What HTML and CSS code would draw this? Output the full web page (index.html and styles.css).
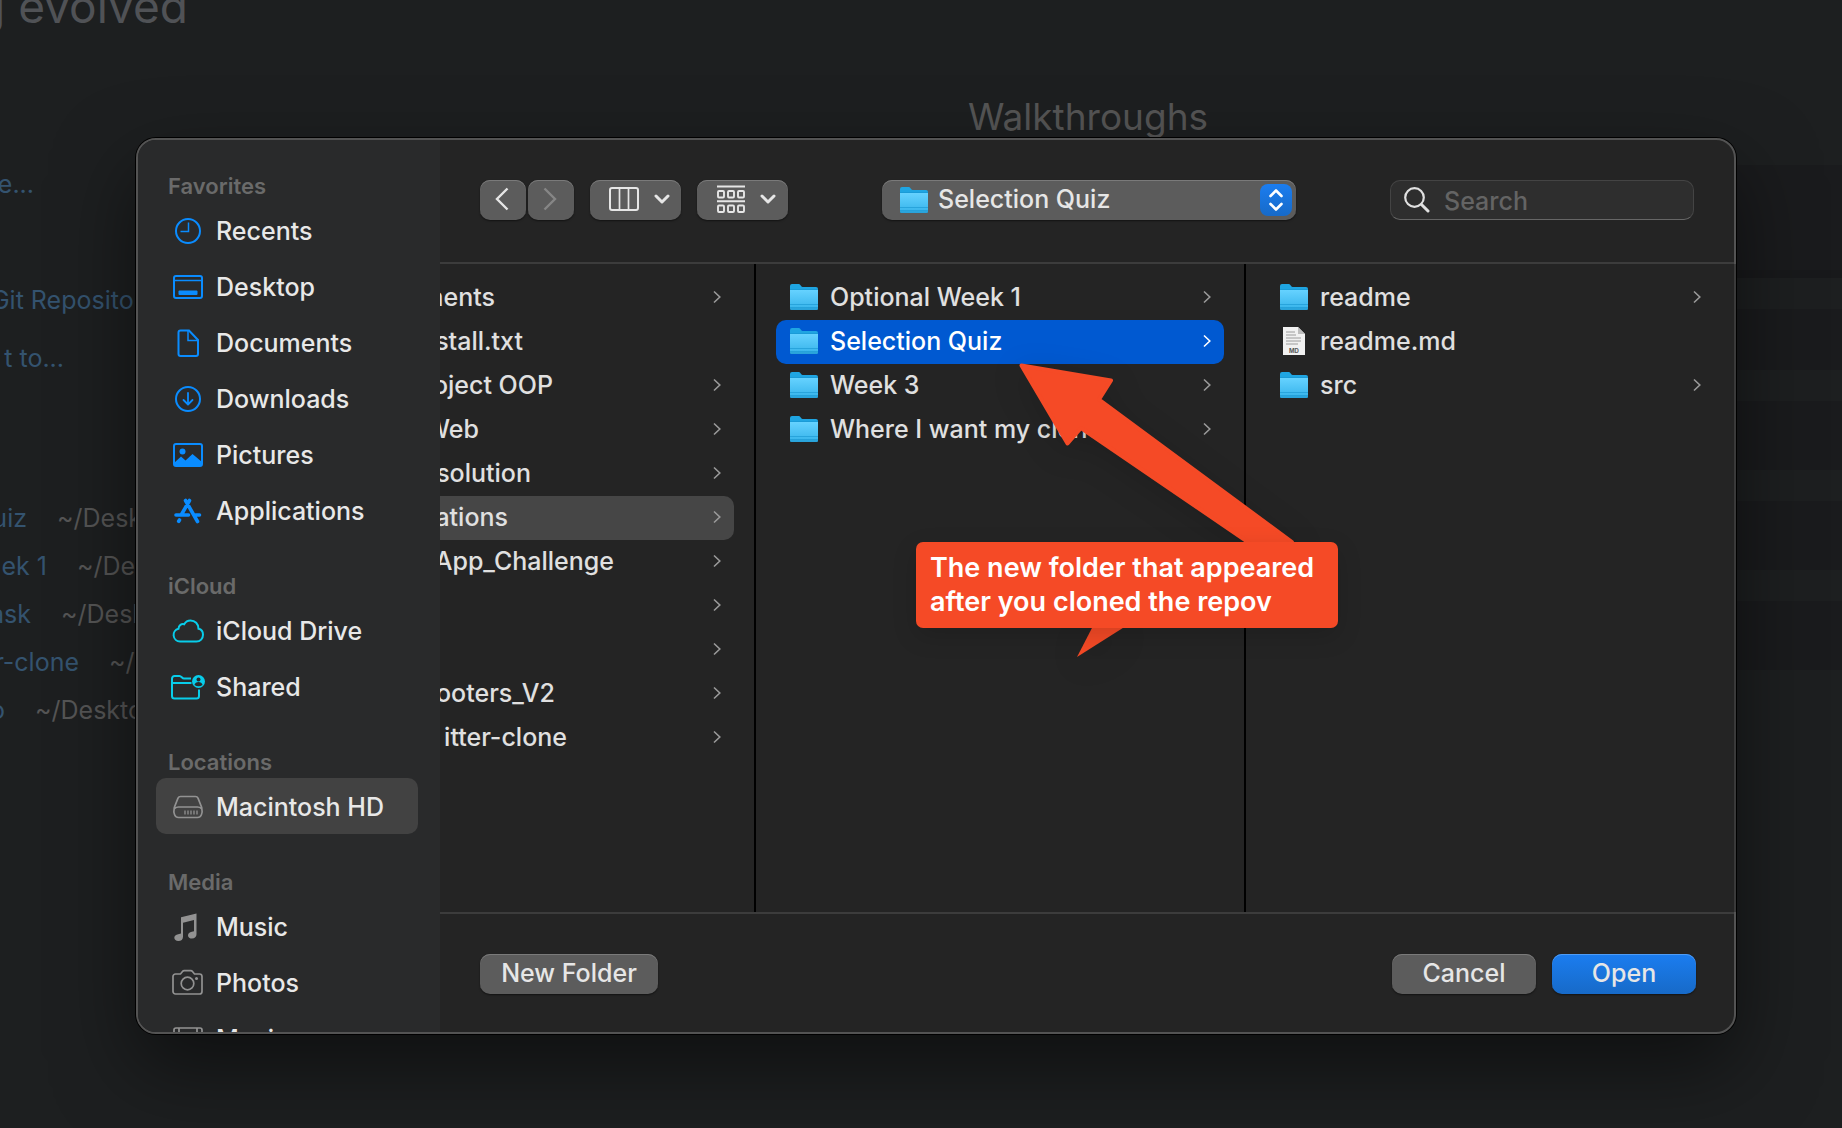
FILE: index.html
```html
<!DOCTYPE html>
<html lang="en">
<head>
<meta charset="utf-8">
<title>Open Folder</title>
<link rel="stylesheet" href="styles.css">
</head>
<body>
<svg class="defs" aria-hidden="true">
  <defs>
    <linearGradient id="folder-front" x1="0" y1="0" x2="0" y2="1">
      <stop offset="0" stop-color="#66d2ff"/>
      <stop offset="1" stop-color="#35b3ea"/>
    </linearGradient>
    <symbol id="folder" viewBox="0 0 28 28">
      <path d="M0 3a2 2 0 0 1 2-2h7c1.400 0 2 3 3.500 3H26a2 2 0 0 1 2 2v6H0z" fill="#1fa5e2"/>
      <path d="M0 7h28v18.500a1.500 1.500 0 0 1-1.500 1.500h-25A1.500 1.500 0 0 1 0 25.500z" fill="url(#folder-front)"/>
      <path d="M0 6.500h28M0 21.500h28M0 24.500h28" stroke="#1795d0" stroke-width="1" opacity=".6"/>
      <path d="M0 26h28" stroke="#1386bd" stroke-width="1" opacity=".7"/>
    </symbol>
    <symbol id="chevron" viewBox="0 0 8 14">
      <path d="M1 1.500 6.800 7 1 12.500" fill="none" stroke="currentColor" stroke-width="1.600"/>
    </symbol>
    <symbol id="down" viewBox="0 0 16 12">
      <path d="M2 3l6 6 6-6" fill="none" stroke="currentColor" stroke-width="3" stroke-linecap="round" stroke-linejoin="round"/>
    </symbol>
  </defs>
</svg>

<main class="welcome">
  <section class="start">
    <h2 class="tagline"><span>g evolved</span></h2>
    <ul class="actions">
      <li><a class="cut cut-file" href="#">e...</a></li>
      <li class="repo"><a class="cut cut-repo" href="#">Git Repository...</a></li>
      <li><a class="cut cut-connect" href="#">t to...</a></li>
    </ul>
    <ul class="recent">
      <li><a class="cut cut-1" href="#">uiz</a><span>~/Desktop</span></li>
      <li><a class="cut cut-2" href="#">ek 1</a><span>~/Desktop</span></li>
      <li><a class="cut cut-3" href="#">ask</a><span>~/Desktop</span></li>
      <li><a class="cut cut-4" href="#">r-clone</a><span>~/Desktop</span></li>
      <li><a class="cut cut-5" href="#">o</a><span>~/Desktop</span></li>
    </ul>
  </section>
  <section class="walkthroughs">
    <h2>Walkthroughs</h2>
    <div class="card card-main"></div>
    <div class="card"></div>
    <div class="card"></div>
    <div class="card"></div>
    <div class="card"></div>
  </section>
</main>

<div class="dialog" role="dialog" aria-label="Open">
  <nav class="sidebar">
    <h3>Favorites</h3>
    <a class="place blue" href="#"><svg viewBox="0 0 36 36"><circle cx="18" cy="18" r="12" fill="none" stroke="currentColor" stroke-width="2"/><path d="M18.500 9.500v9h-8" fill="none" stroke="currentColor" stroke-width="1.500"/></svg>Recents</a>
    <a class="place blue" href="#"><svg viewBox="0 0 36 36"><rect x="4" y="7" width="28" height="22" rx="2" fill="none" stroke="currentColor" stroke-width="2"/><path d="M4 11.500h28" stroke="currentColor" stroke-width="1.500"/><rect x="8.500" y="21.500" width="19" height="4.500" rx="1" fill="currentColor"/></svg>Desktop</a>
    <a class="place blue" href="#"><svg viewBox="0 0 36 36"><path d="M10.500 5.500h8.500l9 9.500v14a2 2 0 0 1-2 2H10.500a2 2 0 0 1-2-2v-21.500a2 2 0 0 1 2-2z" fill="none" stroke="currentColor" stroke-width="2"/><path d="M18 6v9.500h10" fill="none" stroke="currentColor" stroke-width="1.500"/></svg>Documents</a>
    <a class="place blue" href="#"><svg viewBox="0 0 36 36"><circle cx="18" cy="18" r="12" fill="none" stroke="currentColor" stroke-width="2"/><path d="M18 12v11M13.500 19l4.500 4.500 4.500-4.500" fill="none" stroke="currentColor" stroke-width="1.800" stroke-linecap="round" stroke-linejoin="round"/></svg>Downloads</a>
    <a class="place blue" href="#"><svg viewBox="0 0 36 36"><rect x="4" y="7" width="28" height="22" rx="2" fill="none" stroke="currentColor" stroke-width="2"/><circle cx="12.500" cy="14.500" r="3" fill="currentColor"/><path d="M4 26l7-6.500 4.500 4L22.500 17 32 25v4H4z" fill="currentColor"/></svg>Pictures</a>
    <a class="place blue" href="#"><svg viewBox="0 0 36 36"><g stroke="currentColor" stroke-width="3.600" stroke-linecap="round" fill="none"><path d="M19.500 7.500l-8 14M15.500 7.500l12 21M6 22h12.500M25.500 22H29.500M9.500 27l-.8 1.300"/></g></svg>Applications</a>

    <h3>iCloud</h3>
    <a class="place cyan" href="#"><svg viewBox="0 0 36 36"><path d="M10 28.500a6.500 6.500 0 0 1-1.500-12.800c.2-3.500 3-5.200 5.700-4.400C15.500 9 17.700 7.500 20.500 7.500c4.500 0 8 3.400 8 8.300 3 .6 4.500 3.200 4.500 6 0 3.900-2.800 6.700-6.500 6.700z" fill="none" stroke="currentColor" stroke-width="2"/></svg>iCloud Drive</a>
    <a class="place cyan" href="#"><svg viewBox="0 0 36 36"><path d="M29 20.500V27a2.500 2.500 0 0 1-2.500 2.500h-22A2.500 2.500 0 0 1 2 27V9.500A2.500 2.500 0 0 1 4.500 7h5c2 0 2.500 2.500 4.500 2.500h7M2 14h19.500" fill="none" stroke="currentColor" stroke-width="2"/><circle cx="28.500" cy="12.500" r="6.500" fill="currentColor"/><circle cx="28.500" cy="10.500" r="2" fill="#292a2b"/><path d="M24.500 16c.5-4 7.500-4 8 0-2.500 1.800-5.500 1.800-8 0z" fill="#292a2b"/></svg>Shared</a>

    <h3>Locations</h3>
    <a class="place gray selected" href="#" aria-current="page"><svg viewBox="0 0 36 36"><path d="M10.500 7.500h15c1.200 0 2 .6 2.500 1.700l3.700 9.300c1.300 6-.7 10-4.200 10h-19c-3.500 0-5.500-4-4.200-10L8 9.200c.5-1.100 1.300-1.700 2.500-1.700zM4.500 19.500c1.200-1 2.500-1.500 4-1.500h19c1.500 0 2.800.5 4 1.500" fill="none" stroke="currentColor" stroke-width="1.700"/><path d="M15 21.500v4M18 21.500v4M21 21.500v4M24 21.500v4M27 21.500v4" stroke="currentColor" stroke-width="1.300"/></svg>Macintosh HD</a>

    <h3>Media</h3>
    <a class="place gray" href="#"><svg viewBox="0 0 36 36"><path d="M11 8.200 26.500 4.500v20.800c0 2.700-1.800 4.200-4.500 4.200-2.200 0-4-1.200-4-3.100 0-2 1.600-3.200 3.800-3.600l2.200-.5V11L13 13.700v14c0 2.700-1.800 4.300-4.700 4.300-2.300 0-4-1.200-4-3.200s1.600-3.200 3.900-3.600L11 24.600z" fill="currentColor"/></svg>Music</a>
    <a class="place gray" href="#"><svg viewBox="0 0 36 36"><path d="M5.500 9h5l2-2.500c.5-.6 1-.8 1.700-.8h6.600c.7 0 1.200.2 1.700.8l2 2.500h5A2.500 2.500 0 0 1 32 11.500v15A2.500 2.500 0 0 1 29.500 29h-24A2.500 2.500 0 0 1 3 26.500v-15A2.500 2.500 0 0 1 5.500 9z" fill="none" stroke="currentColor" stroke-width="1.700"/><circle cx="17.500" cy="18.500" r="6.300" fill="none" stroke="currentColor" stroke-width="1.700"/><circle cx="26.500" cy="13.500" r="1.500" fill="currentColor"/></svg>Photos</a>
    <a class="place gray" href="#"><svg viewBox="0 0 36 36"><rect x="4" y="7" width="28" height="22" rx="2" fill="none" stroke="currentColor" stroke-width="1.700"/><path d="M9 7v22M27 7v22M9 18h18M4 12.500h5M4 18h5M4 23.500h5M27 12.500h5M27 18h5M27 23.500h5" stroke="currentColor" stroke-width="1.700"/></svg>Movies</a>
  </nav>

  <div class="main">
    <header class="toolbar">
      <div class="tools">
        <div class="history">
          <button class="btn nav-btn" aria-label="Back"><svg width="14" height="24" viewBox="0 0 14 24"><path d="M12.500 1.500 2 12l10.500 10.500" fill="none" stroke="currentColor" stroke-width="2.400"/></svg></button>
          <button class="btn nav-btn dim" aria-label="Forward"><svg width="14" height="24" viewBox="0 0 14 24"><path d="M1.500 1.500 12 12 1.500 22.500" fill="none" stroke="currentColor" stroke-width="2.400"/></svg></button>
        </div>
        <button class="btn view-btn" aria-label="Column view"><svg width="30" height="24" viewBox="0 0 30 24"><rect x="1" y="1" width="28" height="22" rx="2" fill="none" stroke="currentColor" stroke-width="2"/><path d="M10.500 1v22M19.500 1v22" stroke="currentColor" stroke-width="1.700"/></svg><svg width="16" height="12"><use href="#down"/></svg></button>
        <button class="btn view-btn" aria-label="Group items"><svg width="28" height="28" viewBox="0 0 28 28"><g fill="none" stroke="currentColor" stroke-width="1.900"><path d="M0 1.500h28M0 16.200h28"/><rect x="1" y="6" width="6" height="6.500" rx="1"/><rect x="11" y="6" width="6" height="6.500" rx="1"/><rect x="21" y="6" width="6" height="6.500" rx="1"/><rect x="1" y="20.500" width="6" height="6.500" rx="1"/><rect x="11" y="20.500" width="6" height="6.500" rx="1"/><rect x="21" y="20.500" width="6" height="6.500" rx="1"/></g></svg><svg width="16" height="12"><use href="#down"/></svg></button>
      </div>
      <div class="popup">
        <svg class="popup-icon" width="28" height="28"><use href="#folder"/></svg>
        <select class="btn popup-select" aria-label="Current folder"><option>Selection Quiz</option></select>
        <span class="stepper"><svg width="16" height="24" viewBox="0 0 16 24"><path d="M2.500 8 8 2.500 13.500 8M2.500 16 8 21.500l5.500-5.500" fill="none" stroke="currentColor" stroke-width="2.600" stroke-linecap="round" stroke-linejoin="round"/></svg></span>
      </div>
      <label class="search">
        <svg width="26" height="26" viewBox="0 0 26 26"><circle cx="10.500" cy="10.500" r="9.300" fill="none" stroke="currentColor" stroke-width="2.200"/><path d="M17.500 17.500l6.500 6.500" stroke="currentColor" stroke-width="3" stroke-linecap="round"/></svg>
        <input type="text" placeholder="Search" aria-label="Search">
      </label>
    </header>

    <div class="columns">
      <ul class="column first">
        <li class="row"><span class="cut name-1">ments</span><svg class="more"><use href="#chevron"/></svg></li>
        <li class="row"><span class="cut name-2">stall.txt</span></li>
        <li class="row"><span class="cut name-3">oject OOP</span><svg class="more"><use href="#chevron"/></svg></li>
        <li class="row"><span class="cut name-4">Web</span><svg class="more"><use href="#chevron"/></svg></li>
        <li class="row"><span class="cut name-5">solution</span><svg class="more"><use href="#chevron"/></svg></li>
        <li class="row open"><span class="cut name-6">ations</span><svg class="more"><use href="#chevron"/></svg></li>
        <li class="row"><span class="cut name-7">App_Challenge</span><svg class="more"><use href="#chevron"/></svg></li>
        <li class="row"><svg class="more"><use href="#chevron"/></svg></li>
        <li class="row"><svg class="more"><use href="#chevron"/></svg></li>
        <li class="row"><span class="cut name-8">ooters_V2</span><svg class="more"><use href="#chevron"/></svg></li>
        <li class="row"><span class="cut name-9">itter-clone</span><svg class="more"><use href="#chevron"/></svg></li>
      </ul>
      <ul class="column">
        <li class="row"><svg class="file"><use href="#folder"/></svg>Optional Week 1<svg class="more"><use href="#chevron"/></svg></li>
        <li class="row active"><svg class="file"><use href="#folder"/></svg>Selection Quiz<svg class="more"><use href="#chevron"/></svg></li>
        <li class="row"><svg class="file"><use href="#folder"/></svg>Week 3<svg class="more"><use href="#chevron"/></svg></li>
        <li class="row"><svg class="file"><use href="#folder"/></svg>Where I want my clone<svg class="more"><use href="#chevron"/></svg></li>
      </ul>
      <ul class="column">
        <li class="row"><svg class="file"><use href="#folder"/></svg>readme<svg class="more"><use href="#chevron"/></svg></li>
        <li class="row"><svg class="file" viewBox="0 0 28 28"><path d="M3 0h15l7 7v21H3z" fill="#f1f1f1"/><path d="M18 0v7h7z" fill="#bdbdbd"/><path d="M6 5h9M6 8h10M6 11h15M6 14h15M6 17h12" stroke="#9c9c9c" stroke-width="1"/><text x="14" y="26" class="ext">MD</text></svg>readme.md</li>
        <li class="row"><svg class="file"><use href="#folder"/></svg>src<svg class="more"><use href="#chevron"/></svg></li>
      </ul>
    </div>

    <footer class="footer">
      <button class="btn new-btn">New Folder</button>
      <div class="confirm">
        <button class="btn wide-btn">Cancel</button>
        <button class="btn wide-btn primary">Open</button>
      </div>
    </footer>
  </div>

  <div class="note">
    <svg class="arrow" width="422" height="296" viewBox="0 0 422 296" aria-hidden="true"><path d="M105.500 3.500 195 18.500 183 37.500 376 180V200H360L332 180 165 66 151.500 81.500z" fill="#f54a26" stroke="#f54a26" stroke-width="4" stroke-linejoin="round"/><path d="M177 264h33l-49 31z" fill="#f54a26"/></svg>
    <p>The new folder that appeared<br>after you cloned the repov</p>
  </div>
</div>
</body>
</html>
```

FILE: styles.css
```css
* { box-sizing: border-box; }
html, body { height: 100%; }
body {
  margin: 0;
  overflow: hidden;
  background: #1d1f20;
  color: #e0e0e0;
  font: 25px/32px Inter, "Liberation Sans", sans-serif;
}
h2, h3, p, ul { margin: 0; padding: 0; }
ul { list-style: none; }
a { color: inherit; text-decoration: none; }
button, input, select { font: inherit; color: inherit; }
.defs { position: absolute; width: 0; height: 0; }

/* text scrolled past the left edge keeps its right end in view */
.cut {
  display: flex;
  flex: none;
  justify-content: flex-end;
  overflow: hidden;
  white-space: nowrap;
}

/* welcome page behind the dialog */
.welcome {
  display: grid;
  grid-template-columns: 968px 1fr;
  height: 100%;
  color: #555;
}
.welcome h2 { font-size: 37px; line-height: 48px; font-weight: 400; }
.start { overflow: hidden; }
.tagline {
  display: flex;
  justify-content: flex-end;
  width: 188px;
  height: 36px;
  color: #505256;
  white-space: nowrap;
}
.welcome .tagline { font-size: 46px; line-height: 12px; }
.start a { color: #34536f; }
.actions { padding-top: 132px; }
.actions li { height: 58px; }
.actions .repo { margin-top: 58px; }
.cut-file { width: 34px; }
.cut-repo { width: 178px; }
.cut-connect { width: 64px; }
.recent { padding-top: 102px; }
.recent li { display: flex; gap: 30px; height: 48px; }
.cut-1 { width: 27px; }
.cut-2 { width: 47px; }
.cut-3 { width: 31px; }
.cut-4 { width: 79px; }
.cut-5 { width: 5px; }
.walkthroughs { padding-top: 93px; }
.card {
  height: 69px;
  margin-top: 31px;
  background: #1a1b1d;
}
.walkthroughs .card-main {
  height: 113px;
  margin-top: 24px;
  border-bottom: 8px solid #18191b;
}
.card-main + .card { height: 61px; }

/* file dialog */
.dialog {
  position: absolute;
  inset: 138px 106px 94px 136px;
  display: flex;
  border: 2px solid #535353;
  border-radius: 20px;
  background: #242424;
  box-shadow: 0 0 0 1px #000, 0 32px 80px rgba(0, 0, 0, .5);
}
.sidebar {
  flex: 0 0 302px;
  overflow: hidden;
  padding: 28px 22px 0 18px;
  border-radius: 18px 0 0 18px;
  background: #292a2b;
}
.sidebar h3 {
  height: 34px;
  padding-left: 12px;
  font-size: 22px;
  line-height: 36px;
  font-weight: 600;
  color: #6a6a6a;
}
.sidebar .place + h3 { margin-top: 30px; }
.place {
  display: flex;
  align-items: center;
  gap: 10px;
  height: 56px;
  padding: 2px 0 0 14px;
  border-radius: 10px;
  color: #e8e8e8;
  font-weight: 500;
  white-space: nowrap;
}
.place svg { flex: none; width: 36px; height: 36px; }
.blue svg { color: #0a8cff; }
.cyan svg { color: #08cdea; }
.gray svg { color: #929292; }
.selected { background: #424242; }

.main { flex: 1; min-width: 0; display: flex; flex-direction: column; }
.toolbar {
  display: flex;
  justify-content: space-between;
  height: 124px;
  padding: 40px 40px 0;
  border-bottom: 2px solid #3c3c3c;
}
.tools { display: flex; gap: 16px; }
.history { display: flex; gap: 2px; }
.btn {
  display: flex;
  align-items: center;
  justify-content: center;
  height: 40px;
  padding: 0 0 2px;
  border: 0;
  border-radius: 10px;
  background: #5c5c5c;
  box-shadow: inset 0 1px 0 #7a7a7a, 0 1px 2px rgba(0, 0, 0, .5);
  color: #e6e6e6;
  font-weight: 500;
}
.nav-btn { width: 46px; padding-right: 2px; }
.dim { color: #868686; }
.view-btn { width: 91px; gap: 15px; padding-left: 7px; }
.popup { display: grid; flex: 0 0 414px; height: 40px; align-items: center; }
.popup > * { grid-area: 1 / 1; }
.popup-icon { z-index: 1; margin-left: 18px; pointer-events: none; }
.popup-select { width: 100%; appearance: none; padding-left: 56px; }
.stepper {
  display: flex;
  align-items: center;
  justify-content: center;
  justify-self: end;
  width: 32px;
  height: 32px;
  margin-right: 4px;
  border-radius: 8px;
  background: linear-gradient(#1b7df0, #176ac8);
  color: #fff;
  pointer-events: none;
}
.search {
  display: flex;
  align-items: center;
  gap: 14px;
  width: 304px;
  height: 40px;
  padding-left: 13px;
  border: 1px solid #444;
  border-bottom-color: #666;
  border-radius: 10px;
  background: #2e2e2e;
}
.search svg { flex: none; }
.search input {
  flex: 1;
  min-width: 0;
  padding: 2px 0 0;
  border: 0;
  outline: 0;
  background: none;
  font-weight: 500;
}
.search input::placeholder { color: #646464; opacity: 1; }

.columns {
  flex: 1;
  min-height: 0;
  display: grid;
  grid-template-columns: 316px 490px 1fr;
  margin-right: -2px;
  border-right: 2px solid #3a3a3a;
  font-weight: 500;
}
.column { padding: 12px 20px; border-right: 2px solid #000; }
.column:last-child { border-right: 0; }
.first { padding-left: 0; }
.row {
  display: flex;
  align-items: center;
  height: 44px;
  padding: 0 13px 2px 14px;
  border-radius: 10px;
  white-space: nowrap;
}
.first .row { padding-left: 0; border-radius: 0 10px 10px 0; }
.file { flex: none; width: 28px; height: 28px; margin-right: 12px; }
.more { flex: none; width: 8px; height: 14px; margin-left: auto; color: #9a9a9a; }
.open { background: #464646; }
.active { background: #0059d1; color: #fff; }
.active .more { color: #fff; }
.ext { font-size: 6px; font-weight: 700; text-anchor: middle; fill: #555; }
.name-1 { width: 55px; }
.name-2 { width: 83px; }
.name-3 { width: 113px; }
.name-4 { width: 39px; }
.name-5 { width: 91px; }
.name-6 { width: 68px; }
.name-7 { width: 174px; }
.name-8 { width: 115px; }
.name-9 { width: 127px; }

.footer {
  display: flex;
  justify-content: space-between;
  height: 120px;
  padding: 40px 38px 0 40px;
  border-top: 2px solid #3c3c3c;
}
.new-btn { width: 178px; }
.confirm { display: flex; gap: 16px; }
.wide-btn { width: 144px; }
.primary {
  background: linear-gradient(#1b7df0, #176ac8);
  box-shadow: inset 0 1px 0 #4f9cf5, 0 1px 2px rgba(0, 0, 0, .5);
}

/* callout with its arrow, drawn over the file list */
.note { position: absolute; top: 222px; left: 778px; width: 422px; }
.arrow { display: block; filter: drop-shadow(0 8px 16px rgba(0, 0, 0, .15)); }
.note p {
  position: absolute;
  top: 180px;
  left: 0;
  width: 100%;
  height: 86px;
  padding: 9px 14px;
  border-radius: 7px;
  background: #f54a26;
  box-shadow: 0 8px 24px rgba(0, 0, 0, .15);
  color: #fff;
  font-size: 27px;
  line-height: 34px;
  font-weight: 600;
  white-space: nowrap;
}
```
